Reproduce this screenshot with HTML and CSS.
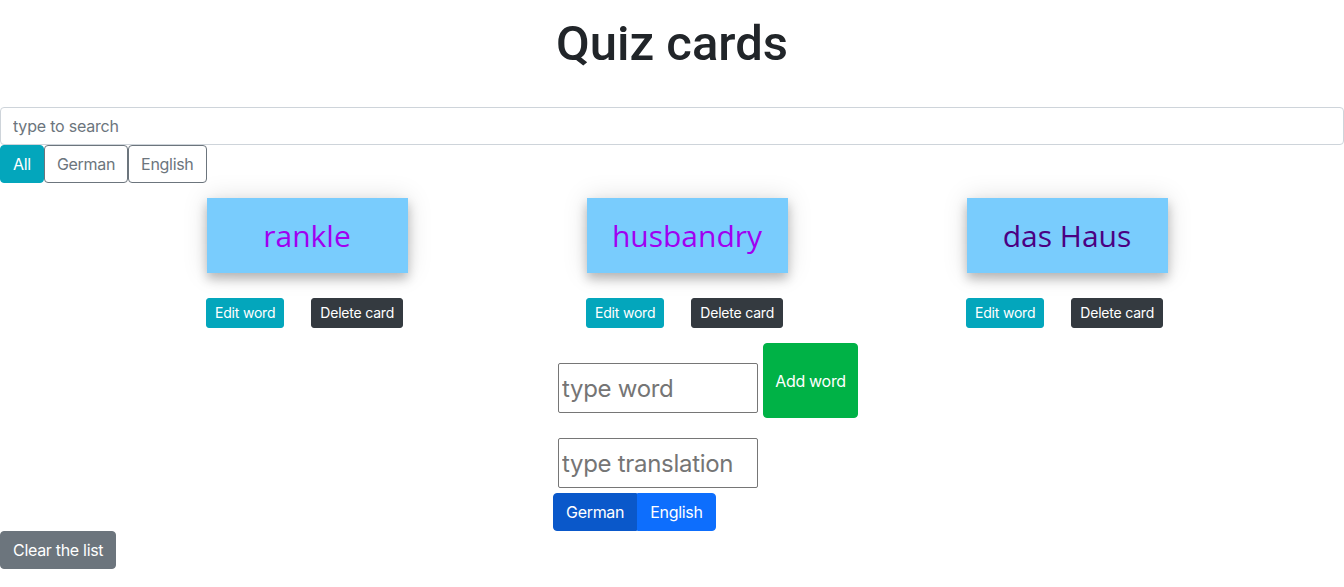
FILE: index.html
```html
<!DOCTYPE html>
<html lang="en">
<head>
<meta charset="utf-8">
<title>Quiz cards</title>
<link rel="stylesheet" href="styles.css">
</head>
<body>
<h1 class="title">Quiz cards</h1>
<input class="search" type="text" placeholder="type to search">
<div class="filters">
  <button class="btn btn-info">All</button>
  <button class="btn btn-outline">German</button>
  <button class="btn btn-outline">English</button>
</div>
<div class="cards">
  <div class="word-card">
    <div class="card-face purple">rankle</div>
    <div class="card-actions">
      <button class="btn btn-sm btn-info edit">Edit word</button>
      <button class="btn btn-sm btn-dark">Delete card</button>
    </div>
  </div>
  <div class="word-card">
    <div class="card-face purple">husbandry</div>
    <div class="card-actions">
      <button class="btn btn-sm btn-info edit">Edit word</button>
      <button class="btn btn-sm btn-dark">Delete card</button>
    </div>
  </div>
  <div class="word-card">
    <div class="card-face indigo">das Haus</div>
    <div class="card-actions">
      <button class="btn btn-sm btn-info edit">Edit word</button>
      <button class="btn btn-sm btn-dark">Delete card</button>
    </div>
  </div>
</div>
<div class="add-form">
  <div class="form-row">
    <input class="word-input" type="text" placeholder="type word">
    <button class="btn btn-success add">Add word</button>
  </div>
  <div class="form-row">
    <input class="word-input" type="text" placeholder="type translation">
  </div>
  <div class="lang-group">
    <button class="btn btn-primary active">German</button>
    <button class="btn btn-primary">English</button>
  </div>
</div>
<button class="btn btn-secondary clear">Clear the list</button>
</body>
</html>
```
FILE: styles.css
```css
* { box-sizing: border-box; }
body {
  margin: 0;
  font-family: "Inter", "Liberation Sans", sans-serif;
  color: #212529;
  background: #fff;
}
.title {
  margin: 15px 0 34px;
  text-align: center;
  font-family: "Roboto", "Liberation Sans", sans-serif;
  font-weight: 500;
  font-size: 49px;
  line-height: 58px;
  color: #212529;
}
.search {
  display: block;
  width: 100%;
  height: 38px;
  padding: 6px 12px;
  border: 1px solid #ced4da;
  border-radius: 4px;
  font-family: inherit;
  font-size: 16px;
  letter-spacing: -0.2px;
  color: #495057;
  outline: none;
}
.search::placeholder { color: #6c757d; }
.filters { display: flex; }
.btn {
  font-family: inherit;
  font-size: 16px;
  line-height: 24px;
  letter-spacing: -0.3px;
  padding: 6px 12px;
  border: 1px solid transparent;
  border-radius: 4px;
  cursor: pointer;
  white-space: nowrap;
}
.btn-info { background: #03a6bc; color: #fff; border-color: #03a6bc; }
.btn-outline { background: #fff; color: #6c757d; border-color: #6c757d; }
.btn-dark { background: #343a40; color: #fff; border-color: #343a40; }
.btn-secondary { background: #6c757d; color: #fff; border-color: #6c757d; }
.btn-success { background: #00b246; color: #fff; border-color: #00b246; }
.btn-primary { background: #0d6efd; color: #fff; border-color: #0d6efd; }
.btn-primary.active { background: #0a58ca; border-color: #0a58ca; }
.btn-sm {
  font-size: 14px;
  line-height: 20px;
  letter-spacing: -0.2px;
  padding: 4px 8px;
  border-radius: 3px;
}
.cards {
  display: grid;
  grid-template-columns: repeat(3, 380px);
  justify-content: center;
  padding-left: 30px;
  margin-top: 15px;
}
.word-card {
  display: flex;
  flex-direction: column;
  align-items: center;
}
.card-face {
  width: 201px;
  height: 75px;
  background: #79ccfd;
  display: flex;
  align-items: center;
  justify-content: center;
  font-family: "Open Sans", "Noto Sans", sans-serif;
  font-size: 30px;
  box-shadow: 0 6px 10px rgba(0,0,0,0.24), 0 0 26px rgba(0,0,0,0.13);
}
.purple { color: #a000f0; }
.indigo { color: #4b0082; }
.card-actions {
  width: 200px;
  display: flex;
  gap: 27px;
  margin-top: 25px;
}
.card-actions .edit { margin-left: -1px; }
.add-form {
  display: flex;
  flex-direction: column;
  align-items: flex-start;
  padding-left: 553px;
  margin-top: 15px;
}
.form-row {
  display: flex;
  align-items: flex-start;
}
.word-input {
  width: 200px;
  height: 50px;
  margin: 20px 0 0 5px;
  padding: 0 3px;
  border: 1px solid #767676;
  border-radius: 2px;
  font-family: inherit;
  font-size: 24px;
  letter-spacing: -0.3px;
  color: #000;
  outline: none;
}
.word-input::placeholder { color: #757575; }
.add {
  width: 95px;
  height: 75px;
  margin-left: 5px;
  padding: 0;
}
.lang-group {
  display: inline-flex;
  margin-top: 5px;
}
.lang-group .btn:first-child { border-top-right-radius: 0; border-bottom-right-radius: 0; }
.lang-group .btn:last-child { border-top-left-radius: 0; border-bottom-left-radius: 0; }
.clear { display: block; }
```
